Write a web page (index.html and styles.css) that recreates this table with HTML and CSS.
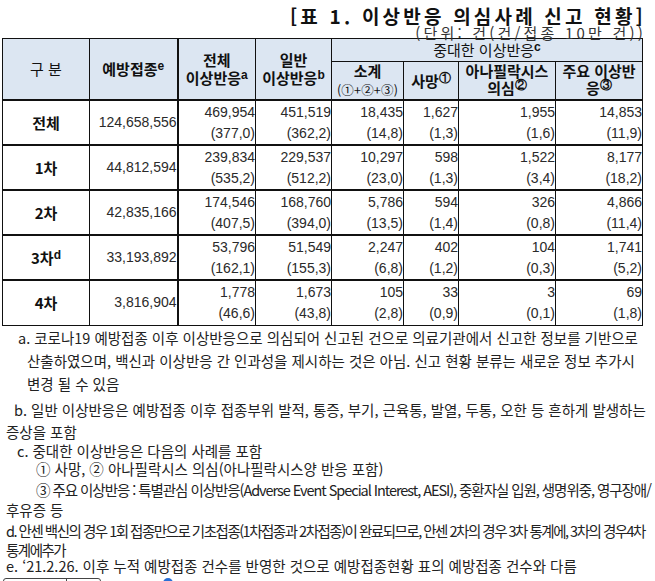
FILE: index.html
```html
<!DOCTYPE html>
<html lang="ko">
<head>
<meta charset="utf-8">
<link rel="stylesheet" href="styles.css">
</head>
<body>
<div class="page">
  <div class="caption">
    <div class="title">[표 1. 이상반응 의심사례 신고 현황]</div>
    <div class="unit">(단위: 건(건/접종 10만 건))</div>
  </div>
  <table class="stats">
    <colgroup>
      <col class="c1"><col class="c2"><col class="c3"><col class="c4"><col class="c5"><col class="c6"><col class="c7"><col class="c8">
    </colgroup>
    <thead>
      <tr class="h1">
        <th rowspan="2" class="plain">구 분</th>
        <th rowspan="2" class="thickr">예방접종<sup>e</sup></th>
        <th rowspan="2">전체<br>이상반응<sup>a</sup></th>
        <th rowspan="2">일반<br>이상반응<sup>b</sup></th>
        <th colspan="4" class="plain">중대한 이상반응<sup>c</sup></th>
      </tr>
      <tr class="h2">
        <th><span class="sub1">소계</span><br><span class="sum">(①+②+③)</span></th>
        <th>사망<sup>①</sup></th>
        <th class="tight">아나필락시스<br>의심<sup>②</sup></th>
        <th class="tight">주요 이상반<br>응<sup>③</sup></th>
      </tr>
    </thead>
    <tbody>
      <tr>
        <th class="lab">전체</th><td class="vac thickr">124,658,556</td>
        <td>469,954<br>(377,0)</td><td>451,519<br>(362,2)</td><td>18,435<br>(14,8)</td><td>1,627<br>(1,3)</td><td>1,955<br>(1,6)</td><td>14,853<br>(11,9)</td>
      </tr>
      <tr>
        <th class="lab">1차</th><td class="vac thickr">44,812,594</td>
        <td>239,834<br>(535,2)</td><td>229,537<br>(512,2)</td><td>10,297<br>(23,0)</td><td>598<br>(1,3)</td><td>1,522<br>(3,4)</td><td>8,177<br>(18,2)</td>
      </tr>
      <tr>
        <th class="lab">2차</th><td class="vac thickr">42,835,166</td>
        <td>174,546<br>(407,5)</td><td>168,760<br>(394,0)</td><td>5,786<br>(13,5)</td><td>594<br>(1,4)</td><td>326<br>(0,8)</td><td>4,866<br>(11,4)</td>
      </tr>
      <tr>
        <th class="lab">3차<sup>d</sup></th><td class="vac thickr">33,193,892</td>
        <td>53,796<br>(162,1)</td><td>51,549<br>(155,3)</td><td>2,247<br>(6,8)</td><td>402<br>(1,2)</td><td>104<br>(0,3)</td><td>1,741<br>(5,2)</td>
      </tr>
      <tr>
        <th class="lab">4차</th><td class="vac thickr">3,816,904</td>
        <td>1,778<br>(46,6)</td><td>1,673<br>(43,8)</td><td>105<br>(2,8)</td><td>33<br>(0,9)</td><td>3<br>(0,1)</td><td>69<br>(1,8)</td>
      </tr>
    </tbody>
  </table>
  <div class="notes">
    <div class="ln ia n-a1">a. 코로나19 예방접종 이후 이상반응으로 의심되어 신고된 건으로 의료기관에서 신고한 정보를 기반으로</div>
    <div class="ln ia2 n-a2">산출하였으며, 백신과 이상반응 간 인과성을 제시하는 것은 아님. 신고 현황 분류는 새로운 정보 추가시</div>
    <div class="ln ia2 n-a3">변경 될 수 있음</div>
    <div class="ln ib n-b1">b. 일반 이상반응은 예방접종 이후 접종부위 발적, 통증, 부기, 근육통, 발열, 두통, 오한 등 흔하게 발생하는</div>
    <div class="ln i0 n-b2">증상을 포함</div>
    <div class="ln ic n-c">c. 중대한 이상반응은 다음의 사례를 포함</div>
    <div class="ln icc n-c1">① 사망, ② 아나필락시스 의심(아나필락시스양 반응 포함)</div>
    <div class="ln icc narrow3 n-c3">③ 주요 이상반응 : 특별관심 이상반응(Adverse Event Special Interest, AESI), 중환자실 입원, 생명위중, 영구장애/</div>
    <div class="ln i0 n-c4">후유증 등</div>
    <div class="ln i0 narrowd n-d1">d. 안센 백신의 경우 1회 접종만으로 기초접종(1차접종과 2차접종)이 완료되므로, 안센 2차의 경우 3차 통계에, 3차의 경우4차</div>
    <div class="ln i0 narrowd n-d2">통계에추가</div>
    <div class="ln i0 n-e">e. ‘21.2.26. 이후 누적 예방접종 건수를 반영한 것으로 예방접종현황 표의 예방접종 건수와 다름</div>
  </div>
  <div class="toolbar">
    <div class="tbox"><span class="tseg"></span></div>
    <span class="dot"></span>
  </div>
</div>
</body>
</html>
```

FILE: styles.css
```css
html, body {
  margin: 0;
  padding: 0;
  background: #ffffff;
}
.page {
  width: 655px;
  height: 581px;
  overflow: hidden;
  font-family: "Liberation Sans", "Noto Sans CJK KR", sans-serif;
  color: #1a1a1a;
}
.caption {
  display: flex;
  flex-direction: column;
  align-items: flex-end;
  padding-right: 12px;
  padding-top: 7px;
  height: 31px;
  box-sizing: border-box;
}
.title {
  font-family: "Noto Sans CJK KR", sans-serif;
  font-weight: 700;
  font-size: 19px;
  letter-spacing: 3.2px;
  line-height: 18px;
  margin-right: -3px;
  color: #111;
}
.unit {
  font-family: "Noto Sans CJK KR", sans-serif;
  font-size: 15px;
  line-height: 12px;
  letter-spacing: 3.2px;
  color: #333;
  margin-right: -3px;
  margin-top: 2px;
}
.stats {
  margin-left: 2px;
  margin-top: 7px;
  width: 641px;
  table-layout: fixed;
  border-collapse: collapse;
  font-size: 14px;
}
.c1 { width: 87px; }
.c2 { width: 88px; }
.c3 { width: 78px; }
.c4 { width: 76px; }
.c5 { width: 72px; }
.c6 { width: 55px; }
.c7 { width: 97px; }
.c8 { width: 87px; }
.stats th, .stats td {
  border: 1px solid #111;
  padding: 0;
}
.stats thead th {
  background: #dce6f2;
  font-family: "Noto Sans CJK KR", sans-serif;
  font-weight: 700;
  font-size: 15px;
  line-height: 18px;
  text-align: center;
  vertical-align: middle;
  color: #111;
}
.stats thead th.plain {
  font-weight: 400;
}
.stats thead th.tight {
  line-height: 17px;
  vertical-align: top;
}
.h1 { height: 23px; }
.h2 { height: 34px; }
.stats sup {
  font-family: "Liberation Sans", sans-serif;
  font-weight: 700;
  font-size: 12px;
  line-height: 0;
  vertical-align: 5px;
}
.sub1 { font-size: 15px; }
.sum {
  font-weight: 400;
  font-size: 12.5px;
  letter-spacing: 0.2px;
}
.stats tbody tr {
  height: 45px;
  border-top: 2px solid #111;
}
.stats tbody td {
  font-family: "Liberation Sans", sans-serif;
  text-align: right;
  vertical-align: middle;
  font-size: 14px;
  line-height: 21px;
  color: #2a2a2a;
}
.stats .thickr {
  border-right: 2px solid #111;
}
.stats th.lab {
  font-family: "Noto Sans CJK KR", sans-serif;
  font-weight: 700;
  font-size: 15px;
  line-height: 18px;
  text-align: center;
  vertical-align: middle;
  color: #111;
}
.notes {
  font-family: "Noto Sans CJK KR", sans-serif;
  font-size: 14.5px;
  color: #222;
  white-space: nowrap;
}
.ln {
  height: 16px;
  line-height: 16px;
}
.n-a1 { margin-top: 4px; }
.n-a2 { margin-top: 7px; }
.n-a3 { margin-top: 7px; }
.n-b1 { margin-top: 10px; }
.n-b2 { margin-top: 6px; }
.n-c { margin-top: 3px; }
.n-c1 { margin-top: 2px; }
.n-c3 { margin-top: 5px; }
.n-c4 { margin-top: 4px; }
.n-d1 { margin-top: 5px; }
.n-d2 { margin-top: 3px; }
.n-e { margin-top: 0; }
.ia { padding-left: 18px; }
.ia2 { padding-left: 27px; }
.ib { padding-left: 14px; }
.ic { padding-left: 17px; }
.icc { padding-left: 36px; }
.i0 { padding-left: 6px; }
.narrow3 { letter-spacing: -1.05px; }
.narrowd { letter-spacing: -1.5px; }
.toolbar {
  display: flex;
  align-items: flex-start;
  padding-left: 3px;
  margin-top: 4px;
}
.tbox {
  display: flex;
  width: 96px;
  height: 20px;
  border: 1px solid #444;
  border-radius: 3px;
}
.tseg {
  width: 62px;
  border-right: 1px solid #444;
}
.dot {
  width: 10px;
  height: 10px;
  border-radius: 50%;
  background: #2a6fd6;
  margin-left: 62px;
}
```
